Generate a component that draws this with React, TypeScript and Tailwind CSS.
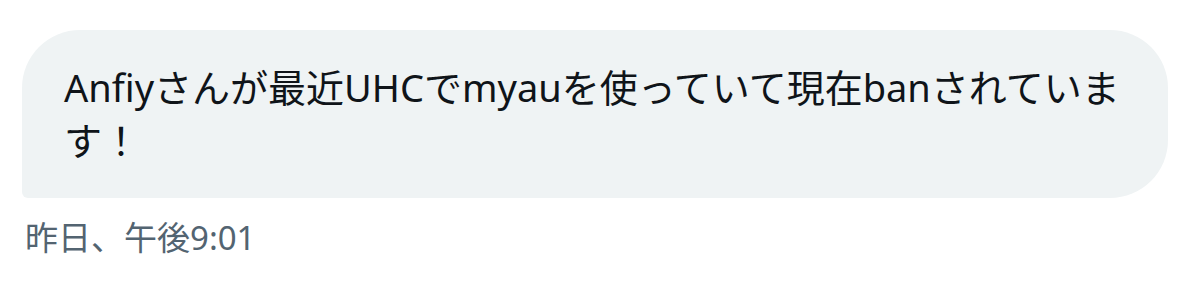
export default function App() {
  return (
    <div className="w-[1200px] h-[298px] bg-white font-['Noto_Sans','Noto_Sans_CJK_JP',sans-serif] pl-[22px] pr-[32px] pt-[30px]">
      <div className="bg-[#eff3f4] text-[#0f1419] text-[38px] leading-[53px] px-[42px] py-[31px] rounded-[58px] rounded-bl-[6px]">
        Anfiyさんが最近UHCでmyauを使っていて現在banされています！
      </div>
      <div className="mt-[18px] pl-[3px] text-[33px] leading-[44px] text-[#536471]">
        昨日、午後9:01
      </div>
    </div>
  );
}
